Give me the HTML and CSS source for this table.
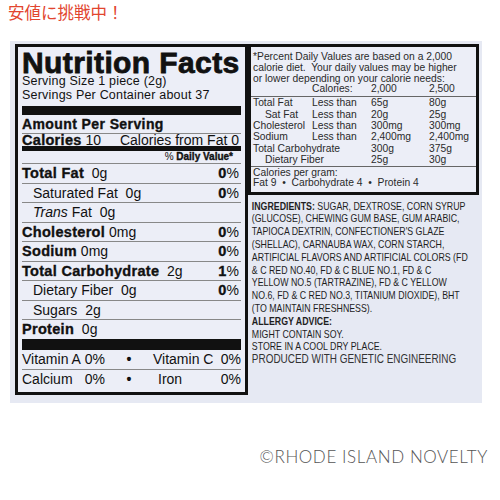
FILE: index.html
```html
<!DOCTYPE html>
<html lang="ja">
<head>
    <meta charset="UTF-8">
    <meta name="viewport" content="width=device-width, initial-scale=1.0">
    <title>Nutrition Facts</title>
    <link rel="stylesheet" href="styles.css">
</head>
<body>

<div class="promo">安値に挑戦中！</div>

<div class="panel">
    <div class="facts">
        <div class="facts-title">Nutrition Facts</div>
        <div class="serving">Serving Size 1 piece (2g)</div>
        <div class="serving">Servings Per Container about 37</div>
        <div class="bar bar-top"></div>
        <div class="amount">Amount Per Serving</div>
        <div class="calories"><span><b>Calories</b> 10</span><span>Calories from Fat 0</span></div>
        <div class="bar bar-mid"></div>
        <div class="dv-head">% <b>Daily Value*</b></div>
        <div class="nrow"><span><b>Total Fat</b>&nbsp; 0g</span><span><b>0</b>%</span></div>
        <div class="nrow sub"><span>Saturated Fat&nbsp; 0g</span><span><b>0</b>%</span></div>
        <div class="nrow sub"><span><i>Trans</i> Fat&nbsp; 0g</span></div>
        <div class="nrow"><span><b>Cholesterol</b> 0mg</span><span><b>0</b>%</span></div>
        <div class="nrow"><span><b>Sodium</b> 0mg</span><span><b>0</b>%</span></div>
        <div class="nrow"><span><b>Total Carbohydrate</b>&nbsp; 2g</span><span><b>1</b>%</span></div>
        <div class="nrow sub"><span>Dietary Fiber&nbsp; 0g</span><span><b>0</b>%</span></div>
        <div class="nrow sub"><span>Sugars&nbsp; 2g</span></div>
        <div class="nrow last"><span><b>Protein</b>&nbsp; 0g</span></div>
        <div class="bar bar-bottom"></div>
        <div class="vrow">
            <span>Vitamin A</span><span class="pct">0%</span><span class="dot">&bull;</span>
            <span>Vitamin C</span><span class="pct">0%</span>
        </div>
        <div class="vrow last">
            <span>Calcium</span><span class="pct">0%</span><span class="dot">&bull;</span>
            <span class="iron">Iron</span><span class="pct">0%</span>
        </div>
    </div>

    <div class="side">
        <div class="dv-box">
            <div class="note">
                *Percent Daily Values are based on a 2,000<br>
                calorie diet.&nbsp; Your daily values may be higher<br>
                or lower depending on your calorie needs:
            </div>
            <div class="dv-grid head">
                <span></span><span>Calories:</span><span>2,000</span><span>2,500</span>
            </div>
            <div class="dv-table">
                <div class="dv-grid"><span>Total Fat</span><span>Less than</span><span>65g</span><span>80g</span></div>
                <div class="dv-grid"><span class="indent">Sat Fat</span><span>Less than</span><span>20g</span><span>25g</span></div>
                <div class="dv-grid"><span>Cholesterol</span><span>Less than</span><span>300mg</span><span>300mg</span></div>
                <div class="dv-grid"><span>Sodium</span><span>Less than</span><span>2,400mg</span><span>2,400mg</span></div>
                <div class="dv-grid"><span class="span2">Total Carbohydrate</span><span>300g</span><span>375g</span></div>
                <div class="dv-grid"><span class="span2 indent">Dietary Fiber</span><span>25g</span><span>30g</span></div>
            </div>
            <div class="per-gram">
                Calories per gram:<br>
                Fat 9 &nbsp;&bull;&nbsp; Carbohydrate 4 &nbsp;&bull;&nbsp; Protein 4
            </div>
        </div>

        <div class="ingredients">
            <div><b>INGREDIENTS:</b> SUGAR, DEXTROSE, CORN SYRUP</div>
            <div>(GLUCOSE), CHEWING GUM BASE, GUM ARABIC,</div>
            <div>TAPIOCA DEXTRIN, CONFECTIONER'S GLAZE</div>
            <div>(SHELLAC), CARNAUBA WAX, CORN STARCH,</div>
            <div>ARTIFICIAL FLAVORS AND ARTIFICIAL COLORS (FD</div>
            <div>&amp; C RED NO.40, FD &amp; C BLUE NO.1, FD &amp; C</div>
            <div>YELLOW NO.5 (TARTRAZINE), FD &amp; C YELLOW</div>
            <div>NO.6, FD &amp; C RED NO.3, TITANIUM DIOXIDE), BHT</div>
            <div>(TO MAINTAIN FRESHNESS).</div>
            <div><b>ALLERGY ADVICE:</b></div>
            <div>MIGHT CONTAIN SOY.</div>
            <div>STORE IN A COOL DRY PLACE.</div>
            <div class="gmo">PRODUCED WITH GENETIC ENGINEERING</div>
        </div>
    </div>
</div>

<div class="credit">&copy;RHODE ISLAND NOVELTY</div>

</body>
</html>
```

FILE: styles.css
```css
body {
    margin: 0;
    background: #fff;
    font-family: "Liberation Sans", Arial, sans-serif;
    color: #111;
}
.promo {
    padding: 4px 0 0 8px;
    font-family: "Noto Sans CJK JP", sans-serif;
    font-size: 16.5px;
    line-height: 16.5px;
    color: #e2452f;
}
.panel {
    display: flex;
    align-items: flex-start;
    width: 472px;
    height: 362px;
    box-sizing: border-box;
    margin: 20.5px 0 0 10px;
    padding: 3px 3px 0 5px;
    background: #e6e9f3;
    overflow: hidden;
}

/* left label */
.facts {
    width: 233px;
    box-sizing: border-box;
    border: 3px solid #111;
    padding: 3px 4px 3px 4px;
    background: #eceef7;
}
.facts b {
    -webkit-text-stroke: 0.35px #111;
}
.facts-title {
    font-size: 30px;
    line-height: 25px;
    font-weight: bold;
    letter-spacing: 0.4px;
    -webkit-text-stroke: 0.8px #111;
    white-space: nowrap;
}
.serving {
    font-size: 12.5px;
    line-height: 13.5px;
    letter-spacing: 0.2px;
}
.bar {
    background: #111;
}
.bar-top {
    height: 9px;
    margin-top: 4px;
}
.bar-mid {
    height: 5px;
}
.bar-bottom {
    height: 11.5px;
}
.amount {
    font-size: 14px;
    line-height: 18px;
    font-weight: bold;
    letter-spacing: 0.4px;
    -webkit-text-stroke: 0.35px #111;
    border-bottom: 1px solid #888;
}
.calories {
    display: flex;
    justify-content: space-between;
    font-size: 14px;
    line-height: 12px;
    padding-right: 2px;
}
.calories b,
.nrow b {
    font-size: 14.5px;
    letter-spacing: 0.3px;
}
.dv-head {
    font-size: 10px;
    line-height: 12px;
    text-align: right;
    padding-right: 8px;
    border-bottom: 1px solid #888;
}
.nrow {
    display: flex;
    justify-content: space-between;
    height: 18.5px;
    font-size: 14px;
    line-height: 19px;
    padding-right: 2px;
    border-bottom: 1px solid #888;
    white-space: nowrap;
}
.nrow.sub {
    padding-left: 11px;
}
.nrow.last {
    border-bottom: none;
}
.vrow {
    display: grid;
    grid-template-columns: 58px 25px 48px 62px 1fr;
    height: 19px;
    font-size: 14px;
    line-height: 19px;
    border-bottom: 1px solid #888;
    white-space: nowrap;
}
.vrow.last {
    border-bottom: none;
}
.vrow .pct {
    text-align: right;
}
.vrow .dot {
    text-align: center;
    font-weight: bold;
}
.vrow .iron {
    padding-left: 5px;
}

/* right column */
.side {
    width: 231px;
    overflow: hidden;
}
.dv-box {
    border: 3px solid #111;
    padding: 5px 0 3px 2px;
    background: #eceef7;
    font-size: 10.3px;
    color: #2a2a2a;
    white-space: nowrap;
}
.note {
    line-height: 10.8px;
}
.dv-grid {
    display: grid;
    grid-template-columns: 59px 59px 58px 1fr;
    line-height: 10.8px;
}
.dv-table {
    margin-top: 1px;
    border-top: 1px solid #666;
    border-bottom: 1px solid #666;
    margin-left: -2px;
    padding-left: 2px;
}
.dv-table .dv-grid {
    line-height: 11.4px;
}
.dv-grid .span2 {
    grid-column: span 2;
}
.dv-grid .indent {
    padding-left: 12px;
}
.per-gram {
    padding-top: 1px;
    line-height: 10.5px;
}
.ingredients {
    width: 300px;
    margin-top: 5px;
    padding-left: 5px;
    font-size: 11.5px;
    line-height: 12.8px;
    color: #1e1e1e;
    white-space: nowrap;
    transform: scaleX(0.765);
    transform-origin: left top;
}
.ingredients .gmo {
    font-size: 13px;
    color: #333;
}

.credit {
    margin-top: 45px;
    padding-right: 12px;
    text-align: right;
    font-family: Lato, "Open Sans", sans-serif;
    font-weight: 300;
    font-size: 17px;
    line-height: 17px;
    letter-spacing: 0.6px;
    color: #555;
}
```
